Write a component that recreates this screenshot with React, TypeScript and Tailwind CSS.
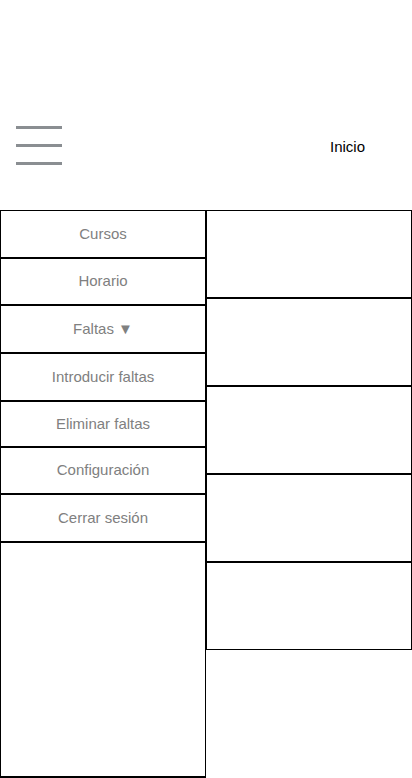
import React from "react";

const items = [
  { label: "Cursos", h: "h-[48px]" },
  { label: "Horario", h: "h-[47px]" },
  { label: "Faltas ▼", h: "h-[48px]" },
  { label: "Introducir faltas", h: "h-[48px]" },
  { label: "Eliminar faltas", h: "h-[46px]" },
  { label: "Configuración", h: "h-[47px]" },
  { label: "Cerrar sesión", h: "h-[48px]" },
];

export default function App() {
  return (
    <div
      className="w-[412px] h-[778px] bg-white overflow-hidden"
      style={{ fontFamily: '"Liberation Sans", Arial, sans-serif' }}
    >
      <div className="h-[210px] flex items-start pt-[126px]">
        <div className="ml-[16px] w-[46px] flex flex-col gap-[15px]">
          <div className="h-[3px] bg-[#8a8e92]" />
          <div className="h-[3px] bg-[#8a8e92]" />
          <div className="h-[3px] bg-[#8a8e92]" />
        </div>
        <div className="ml-[268px] mt-[12px] text-[15px] leading-[18px] text-black">
          Inicio
        </div>
      </div>
      <div className="flex items-start">
        <div className="w-[206px] flex flex-col">
          {items.map((it) => (
            <div
              key={it.label}
              className={`${it.h} border border-black flex items-center justify-center text-[15px] text-[#808080]`}
            >
              {it.label}
            </div>
          ))}
          <div className="h-[236px] border border-black border-b-2" />
        </div>
        <div className="w-[206px] flex flex-col">
          {[0, 1, 2, 3, 4].map((i) => (
            <div key={i} className="h-[88px] border border-black" />
          ))}
        </div>
      </div>
    </div>
  );
}
